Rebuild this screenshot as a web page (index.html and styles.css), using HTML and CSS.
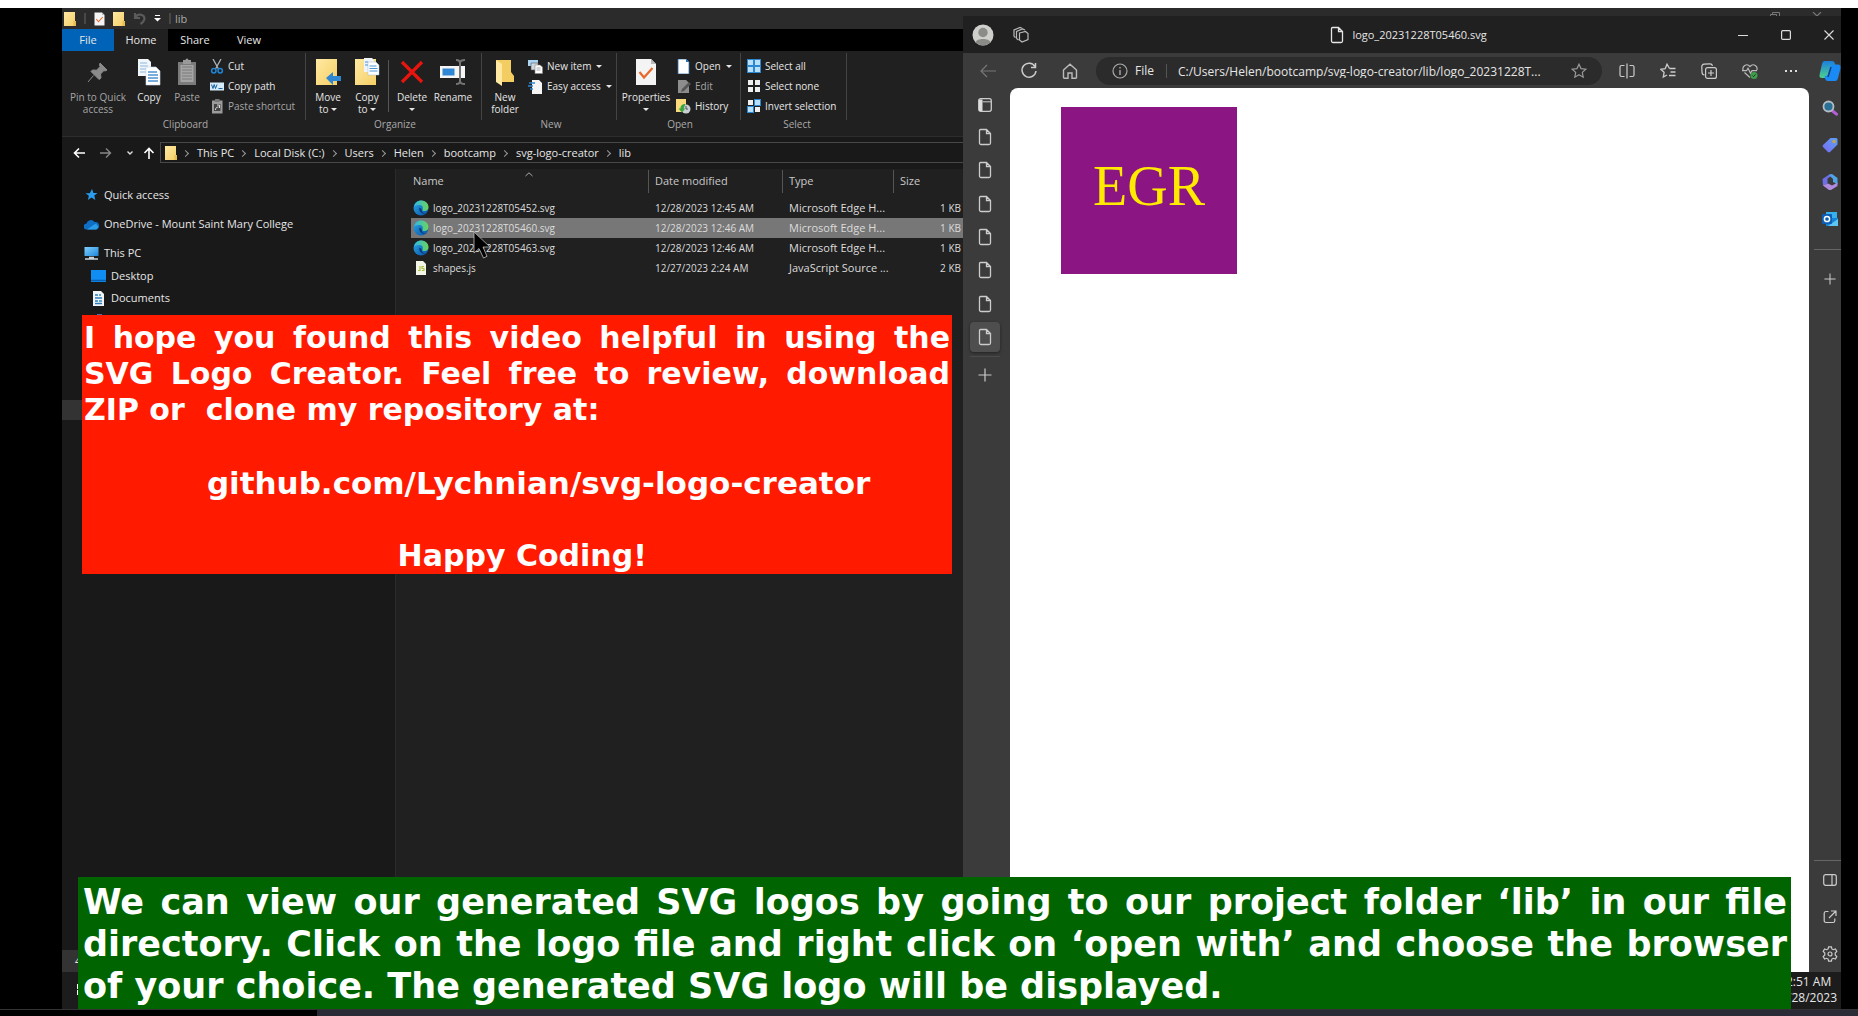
FILE: index.html
```html
<!DOCTYPE html>
<html lang="en">
<head>
<meta charset="utf-8">
<title>SVG Logo Creator walkthrough</title>
<link rel="stylesheet" href="styles.css">
</head>
<body>
<svg class="defs" aria-hidden="true">
  <defs>
    <linearGradient id="fold" x1="0" x2="1" y1="0" y2="1"><stop offset="0" stop-color="#ffe9a2"/><stop offset="1" stop-color="#f5cf66"/></linearGradient>
    <linearGradient id="edgeA" x1="0" x2="1" y1="0" y2="1"><stop offset="0" stop-color="#2aa9e0"/><stop offset="1" stop-color="#0a4fa8"/></linearGradient>
    <linearGradient id="edgeB" x1="0" x2="1"><stop offset="0" stop-color="#2fb5e8"/><stop offset="1" stop-color="#6ad65a"/></linearGradient>
    <linearGradient id="sky" x1="0" x2="1" y1="0" y2="1"><stop offset="0" stop-color="#7fd0ff"/><stop offset="1" stop-color="#1d86d8"/></linearGradient>
    <linearGradient id="cop" x1="0" x2="0" y1="0" y2="1"><stop offset="0" stop-color="#1b7fe0"/><stop offset="1" stop-color="#4fd08a"/></linearGradient>
    <linearGradient id="tag" x1="1" x2="0" y1="0" y2="1"><stop offset="0" stop-color="#5aa2f5"/><stop offset="1" stop-color="#7b6cf0"/></linearGradient>
  </defs>
  <symbol id="i-folder" viewBox="0 0 12 14"><path d="M0 0h11v10h1v4H0z" fill="url(#fold)"/><path d="M9.500 14V9h2.500v5z" fill="#e8bd4f"/></symbol>
  <symbol id="i-edge" viewBox="0 0 16 16"><circle cx="8" cy="8" r="7.500" fill="url(#edgeA)"/><path d="M1 6.500C2 2.500 5 .5 8.300.5c4.200 0 7.200 3 7.200 6.500 0 2.400-1.700 4-4 4-1.600 0-2.400-.7-2-1.600.9-1.900-.2-4.300-3-4.300-2.200 0-4.300.6-5.500 1.400z" fill="url(#edgeB)"/><path d="M6.500 7.500c-1 3 1.200 6.300 5.500 6.300.8 0 1.500-.1 2-.4-3 .6-6-1.600-5.200-4.200z" fill="#073b80"/></symbol>
  <symbol id="i-page" viewBox="0 0 16 18"><path d="M3.500 1.500h6l4 4v9.500a1.500 1.500 0 0 1-1.500 1.500H4A1.500 1.500 0 0 1 2.500 15V2.500a1 1 0 0 1 1-1zM9.500 1.500V5.500h4" fill="none" stroke="currentColor" stroke-width="1.300"/></symbol>
  <symbol id="i-check" viewBox="0 0 20 28"><path d="M0 1h15l5 5v21H0z" fill="#f4f4f4"/><path d="M15 1v5h5z" fill="#b9b9b9"/><path d="M3.500 14l4.500 5.500L16.500 10" fill="none" stroke="#e8692c" stroke-width="2.200"/></symbol>
  <symbol id="i-doc2" viewBox="0 0 24 28"><path d="M1 1h10l3 3v14H1z" fill="#f1f6fb"/><path d="M3 5h7M3 8h8M3 11h8M3 14h8" stroke="#8db6dc"/><path d="M9 9h10l4 4v14H9z" fill="#fff" stroke="#c4d7e8" stroke-width=".6"/><path d="M11 14h9M11 17h10M11 20h10M11 23h10" stroke="#4c93d4" stroke-width="1.300"/></symbol>
  <symbol id="i-plus" viewBox="0 0 14 14"><path d="M7 .5v13M.5 7h13" stroke="currentColor" stroke-width="1.200"/></symbol>
</svg>

<main class="stage">
  <section class="explorer" aria-label="File Explorer">
    <header class="ex-title">
      <svg width="12" height="14"><use href="#i-folder"/></svg>
      <i class="bar"></i>
      <svg class="qa-check" width="11" height="14"><use href="#i-check"/></svg>
      <svg width="12" height="14"><use href="#i-folder"/></svg>
      <svg width="13" height="13" viewBox="0 0 13 13"><path d="M2 1v5h5M2 5.500C4 2.500 8 1.500 10.500 4c2 2.500.5 6-3 8" fill="none" stroke="#5b5b5b" stroke-width="2.200"/></svg>
      <svg width="7" height="7" viewBox="0 0 7 7"><path d="M1 .5h5" stroke="#fff"/><path d="M0 3h7L3.500 6.500z" fill="#fff"/></svg>
      <i class="bar"></i>
      <span>lib</span>
    </header>
    <nav class="ex-tabs">
      <button class="file">File</button><button class="on">Home</button><button>Share</button><button>View</button>
    </nav>

    <div class="ribbon">
      <section class="grp clip">
        <div class="tools">
          <button class="big w66 dim"><svg width="24" height="28" viewBox="0 0 24 28"><path d="M14 5l7 7-2 1-1-.5-3.500 3.500.5 4-2 1.500-8-8L6.500 12l4 .2 3.500-3.500-.5-1.500zM7.500 17.500L2 24" fill="#8a8a8a" stroke="#8a8a8a"/></svg><span>Pin to Quick<br>access</span></button>
          <button class="big w36"><svg width="24" height="28"><use href="#i-doc2"/></svg><span>Copy</span></button>
          <button class="big w40 dim"><svg width="20" height="28" viewBox="0 0 20 28"><path d="M1 4h18v23H1z" fill="#7b7b7b"/><path d="M3.500 7h13v17h-13z" fill="#a5a5a5"/><path d="M5 9h10M5 12h10M5 15h10M5 18h10M5 21h10" stroke="#7b7b7b"/><path d="M6 2h2.500a1.500 1.500 0 0 1 3 0H14v4H6z" fill="#999"/></svg><span>Paste</span></button>
          <div class="stack">
            <button><svg width="14" height="15" viewBox="0 0 14 15"><path d="M3 0l5.500 10M11 0L5.500 10" stroke="#a9b4bd" stroke-width="1.300"/><circle cx="3.800" cy="11.800" r="2.200" fill="none" stroke="#1e86d6" stroke-width="1.500"/><circle cx="10.200" cy="11.800" r="2.200" fill="none" stroke="#1e86d6" stroke-width="1.500"/></svg>Cut</button>
            <button><svg width="14" height="15" viewBox="0 0 14 15"><path d="M0 3.500h14v8H0z" fill="#d5ecfb"/><path d="M1.500 5.500l1.500 4 1.200-4 1.300 4 1.500-4M8.500 9.500h4" fill="none" stroke="#17609f"/></svg>Copy path</button>
            <button class="dim"><svg width="14" height="15" viewBox="0 0 14 15"><path d="M2 1.500h10.500v13H2z" fill="#9b9b9b"/><path d="M5 0h4.500v3H5z" fill="#777"/><path d="M4 5h6.500v7H4z" fill="#444"/><path d="M5.500 11c0-2 1-3 3-3M7 6h2.500v3" fill="none" stroke="#ddd"/></svg>Paste shortcut</button>
          </div>
        </div>
        <h2>Clipboard</h2>
      </section>
      <section class="grp org">
        <div class="tools">
          <button class="big w40"><svg width="26" height="28" viewBox="0 0 26 28"><path d="M1 1h21v26H1z" fill="url(#fold)"/><path d="M11 20l7-6v4h8v5h-8v4z" fill="#2f86d2"/></svg><span>Move<br>to <i class="dn"></i></span></button>
          <button class="big w38"><svg width="26" height="28" viewBox="0 0 26 28"><path d="M1 1h21v26H1z" fill="url(#fold)"/><path d="M10 0h8l2 2v12H10z" fill="#eef4fa"/><path d="M14 4h8l3 3v10H14z" fill="#fff" stroke="#9fbad3" stroke-width=".5"/><path d="M15.500 8h7M15.500 10.500h8M15.500 13h8M11 4h3M11 7h3" stroke="#4c93d4"/></svg><span>Copy<br>to <i class="dn"></i></span></button>
          <i class="split"></i>
          <button class="big w40"><svg width="24" height="28" viewBox="0 0 24 28"><path d="M2 4l20 20M22 4L2 24" stroke="#e8150f" stroke-width="3.200"/></svg><span>Delete<br><i class="dn"></i></span></button>
          <button class="big w42"><svg width="26" height="28" viewBox="0 0 26 28"><path d="M0 8h25v12H0z" fill="#f5f5f5"/><path d="M2.500 10.500h12v7h-12z" fill="#2f86d2"/><path d="M16 2c3 0 4 1 4 3v18c0 2-1 3-4 3M25 2c-3 0-5 1-5 3M20 23c0 2 2 3 5 3" fill="none" stroke="#747474" stroke-width="2"/></svg><span>Rename</span></button>
        </div>
        <h2>Organize</h2>
      </section>
      <section class="grp new">
        <div class="tools">
          <button class="big w40"><svg width="20" height="28" viewBox="0 0 20 28"><path d="M1 2h15v12l3 4v6H6z" fill="#f3cd62"/><path d="M1 2l6 4v22l-6-4z" fill="#ffe9a2"/></svg><span>New<br>folder</span></button>
          <div class="stack">
            <button><svg width="15" height="15" viewBox="0 0 15 15"><path d="M0 1h10v6H0z" fill="#a9d4f2"/><path d="M3 4h7v7H3z" fill="#cfd8df" stroke="#555" stroke-width=".6"/><path d="M7 6h5l2.500 2v6.500H7z" fill="#fff" stroke="#888" stroke-width=".6"/><path d="M8.500 9h4M8.500 11h4" stroke="#aaa"/></svg>New item <i class="dn"></i></button>
            <button><svg width="15" height="15" viewBox="0 0 15 15"><path d="M4 1h7l3 3v11H4z" fill="#f5f5f5"/><path d="M1 4h6M0 7h5M2 10h3" stroke="#2f86d2" stroke-width="1.300"/></svg>Easy access <i class="dn"></i></button>
          </div>
        </div>
        <h2>New</h2>
      </section>
      <section class="grp open">
        <div class="tools">
          <button class="big w54"><svg width="20" height="28"><use href="#i-check"/></svg><span>Properties<br><i class="dn"></i></span></button>
          <div class="stack">
            <button><svg width="15" height="15" viewBox="0 0 15 15"><path d="M2 0h8l3 3v12H2z" fill="#fff" stroke="#2f6fb0" stroke-width=".8"/><path d="M10 0v3h3z" fill="#2f6fb0"/></svg>Open <i class="dn"></i></button>
            <button class="dim"><svg width="15" height="15" viewBox="0 0 15 15"><path d="M2 1h8l3 3v10H2z" fill="#8d8d8d"/><path d="M5 13l1-3 7-7 2 2-7 7z" fill="#555"/></svg>Edit</button>
            <button><svg width="15" height="15" viewBox="0 0 15 15"><path d="M0 0h10v13H0z" fill="#f8da7c"/><circle cx="10" cy="10" r="4.500" fill="#c8ced2"/><path d="M10 7v3h2" fill="none" stroke="#555"/><path d="M9.500 5C6 5 4.500 7 4.500 9.500H2.500l3.500 4 3.200-4H7.500" fill="#36a53e"/></svg>History</button>
          </div>
        </div>
        <h2>Open</h2>
      </section>
      <section class="grp sel">
        <div class="tools">
          <div class="stack">
            <button><svg width="14" height="14" viewBox="0 0 14 14"><path d="M0 0h14v14H0z" fill="#2d86d0"/><path d="M1 1h5v5H1zM8 1h5v5H8zM1 8h5v5H1zM8 8h5v5H8z" fill="#b9e0fb"/></svg>Select all</button>
            <button><svg width="14" height="14" viewBox="0 0 14 14"><path d="M1 1h5v5H1zM8 1h5v5H8zM1 8h5v5H1zM8 8h5v5H8z" fill="#efefef"/></svg>Select none</button>
            <button><svg width="14" height="14" viewBox="0 0 14 14"><path d="M7 0h7v7H7zM0 7h7v7H0z" fill="#2d86d0"/><path d="M8 1h5v5H8zM1 8h5v5H1z" fill="#b9e0fb"/><path d="M1 1h5v5H1zM8 8h5v5H8z" fill="#efefef"/></svg>Invert selection</button>
          </div>
        </div>
        <h2>Select</h2>
      </section>
    </div>

    <div class="address">
      <div class="arrows">
        <svg width="12" height="12" viewBox="0 0 12 12"><path d="M12 6H1.500M6 1.500L1.500 6 6 10.500" fill="none" stroke="#fff" stroke-width="1.600"/></svg>
        <svg width="12" height="12" viewBox="0 0 12 12"><path d="M0 6h10.500M6 1.500L10.500 6 6 10.500" fill="none" stroke="#868686" stroke-width="1.400"/></svg>
        <svg width="6" height="6" viewBox="0 0 6 6"><path d="M.5 1.500L3 4l2.500-2.500" fill="none" stroke="#ddd" stroke-width="1.400"/></svg>
        <svg width="12" height="12" viewBox="0 0 12 12"><path d="M6 12V1.500M1.500 6L6 1.500 10.500 6" fill="none" stroke="#fff" stroke-width="1.600"/></svg>
      </div>
      <nav class="crumbs">
        <svg width="12" height="14"><use href="#i-folder"/></svg>
        <a href="#">This PC</a><a href="#">Local Disk (C:)</a><a href="#">Users</a><a href="#">Helen</a><a href="#">bootcamp</a><a href="#">svg-logo-creator</a><a href="#">lib</a>
      </nav>
    </div>

    <div class="ex-body">
      <nav class="tree">
        <a href="#"><svg width="14" height="14" viewBox="0 0 14 14"><path d="M7.500 1l1.400 4H13L9.800 7.600l1 4.400L7 9.500 3.400 12l1-4.200L1 5.300h4.300z" fill="#2a9df0"/></svg>Quick access</a>
        <a href="#"><svg width="15" height="11" viewBox="0 0 15 11"><path d="M3 10.500a3 3 0 0 1-.5-6A4.500 4.500 0 0 1 10.500 3 3.800 3.800 0 0 1 12 10.500z" fill="#0f6fc5"/><path d="M3 10.500l8-5.500a3 3 0 0 1 1.500 5.500z" fill="#2b9de8"/></svg>OneDrive - Mount Saint Mary College</a>
        <a href="#"><svg width="15" height="14" viewBox="0 0 15 14"><path d="M.5 1h14v9H.5z" fill="url(#sky)"/><path d="M5 11.500h5M1 13h13" stroke="#c8d3db" stroke-width="1.300"/></svg>This PC</a>
        <a href="#" class="sub"><svg width="15" height="12" viewBox="0 0 15 12"><path d="M0 0h15v12H0z" fill="#0f8df2"/><path d="M0 10.500h15" stroke="#0b5fae" stroke-width="1.500"/></svg>Desktop</a>
        <a href="#" class="sub"><svg width="15" height="15" viewBox="0 0 15 15"><path d="M2 0h8l3 3v12H2z" fill="#f1f4f7"/><path d="M4 4h3M4 7h7M4 10h3M4 12.500h7" stroke="#2b7cb8" stroke-width="1.300"/><path d="M8 3h2v2H8zM8 9h3v2H8z" fill="#60a5cf"/></svg>Documents</a>
        <i class="next"></i>
        <i class="picked"></i>
      </nav>
      <div class="list">
        <table>
          <colgroup><col class="c-name"><col class="c-date"><col class="c-type"><col class="c-size"></colgroup>
          <thead><tr><th><span>Name</span><svg class="sort" width="8" height="5" viewBox="0 0 8 5"><path d="M.5 4L4 .8 7.500 4" fill="none" stroke="#aaa"/></svg></th><th>Date modified</th><th>Type</th><th>Size</th></tr></thead>
          <tbody>
            <tr><td><svg width="16" height="16"><use href="#i-edge"/></svg>logo_20231228T05452.svg</td><td>12/28/2023 12:45 AM</td><td>Microsoft Edge H...</td><td>1 KB</td></tr>
            <tr class="on"><td><svg width="16" height="16"><use href="#i-edge"/></svg>logo_20231228T05460.svg</td><td>12/28/2023 12:46 AM</td><td>Microsoft Edge H...</td><td>1 KB</td></tr>
            <tr><td><svg width="16" height="16"><use href="#i-edge"/></svg>logo_20231228T05463.svg</td><td>12/28/2023 12:46 AM</td><td>Microsoft Edge H...</td><td>1 KB</td></tr>
            <tr><td><svg width="16" height="16" viewBox="0 0 16 16"><path d="M3 1h7l3 3v11H3z" fill="#f3f5e6"/><path d="M7 6v4.500H5M11 6.500H9v2h2v2H8.800" fill="none" stroke="#a9bf3f" stroke-width="1.100"/></svg>shapes.js</td><td>12/27/2023 2:24 AM</td><td>JavaScript Source ...</td><td>2 KB</td></tr>
          </tbody>
        </table>
        <svg class="cursor" width="18" height="30" viewBox="0 0 18 30"><path d="M1 1v21l5-4.500 4.500 9.500 3.500-1.700-4-9.300H17z" fill="#000" stroke="#bbb" stroke-width=".8"/></svg>
      </div>
    </div>
    <footer class="ex-status">4</footer>

    <aside class="note thanks">
      <p><span>I hope you found this video helpful in using the</span><span>SVG Logo Creator. Feel free to review, download</span>ZIP or&nbsp; clone my repository at:</p>
      <p class="mid repo">&nbsp;&nbsp;&nbsp;&nbsp;github.com/Lychnian/svg-logo-creator</p>
      <p class="mid">&nbsp;Happy Coding!</p>
    </aside>
  </section>

  <section class="right">
    <div class="behind">
      <svg width="10" height="4" viewBox="0 0 10 4"><path d="M.5 4V2.500h6V4M2.500 2V.5h7V4" fill="none" stroke="#777"/></svg>
      <svg width="10" height="4" viewBox="0 0 10 4"><path d="M1 0l4 4 4-4" fill="none" stroke="#777" stroke-width="1.200"/></svg>
    </div>
    <section class="browser" aria-label="Browser">
      <header class="br-title">
        <div class="br-left">
          <svg width="22" height="22" viewBox="0 0 22 22"><circle cx="11" cy="11" r="10.500" fill="#cfcfcb"/><circle cx="11" cy="8.500" r="4.700" fill="#8b8b87"/><path d="M3.500 18.300c1-4.500 14-4.500 15 0a10.500 10.500 0 0 1-15 0z" fill="#8b8b87"/></svg>
          <svg width="18" height="18" viewBox="0 0 18 18"><path d="M7.500 7l6-1.500 2.500 2v6l-6 2.500-2.500-2zM4.500 12.500v-7l6-2.500 2.500 1M2 10.500V4l6-2.500 2.500 1M4.500 12.500l2 1.500M2 10.500l1.500 1" fill="none" stroke="#b9b9b9" stroke-width="1.200"/></svg>
        </div>
        <h1><svg width="16" height="18"><use href="#i-page"/></svg>logo_20231228T05460.svg</h1>
        <div class="br-win">
          <button aria-label="Minimize"><svg width="10" height="10" viewBox="0 0 10 10"><path d="M0 5.500h10" stroke="#ddd"/></svg></button>
          <button aria-label="Maximize"><svg width="10" height="10" viewBox="0 0 10 10"><rect x=".6" y=".6" width="8.800" height="8.800" rx="1.200" fill="none" stroke="#ddd" stroke-width="1.200"/></svg></button>
          <button aria-label="Close"><svg width="10" height="10" viewBox="0 0 10 10"><path d="M.5.5l9 9M9.500.5l-9 9" stroke="#ddd" stroke-width="1.100"/></svg></button>
        </div>
      </header>
      <div class="br-bar">
        <button aria-label="Back"><svg width="18" height="16" viewBox="0 0 18 16"><path d="M17 8H2M8 2L2 8l6 6" fill="none" stroke="#777" stroke-width="1.200"/></svg></button>
        <button aria-label="Reload"><svg width="18" height="18" viewBox="0 0 18 18"><path d="M15 4.500A7 7 0 1 0 16 9M15.500 1v4.500H11" fill="none" stroke="#ccc" stroke-width="1.500"/></svg></button>
        <button aria-label="Home"><svg width="18" height="18" viewBox="0 0 18 18"><path d="M2.500 8L9 2.200 15.500 8v7.500a.8.800 0 0 1-.8.800H11V11H7v5.300H3.300a.8.800 0 0 1-.8-.8z" fill="none" stroke="#bbb" stroke-width="1.400"/></svg></button>
        <div class="url">
          <svg width="16" height="16" viewBox="0 0 16 16"><circle cx="8" cy="8" r="7" fill="none" stroke="#aaa" stroke-width="1.200"/><path d="M8 7v5M8 4v1.500" stroke="#aaa" stroke-width="1.400"/></svg>
          <label for="u">File</label>
          <input id="u" value="C:/Users/Helen/bootcamp/svg-logo-creator/lib/logo_20231228T...">
          <svg width="16" height="16" viewBox="0 0 16 16"><path d="M8 1.200l2 4.400 4.800.6-3.500 3.200.9 4.800L8 11.800l-4.200 2.400.9-4.800L1.200 6.200 6 5.600z" fill="none" stroke="#999" stroke-width="1.200"/></svg>
        </div>
        <div class="acts">
          <button aria-label="Split screen"><svg width="16" height="16" viewBox="0 0 16 16"><path d="M5.500 2.500h-3a1.500 1.500 0 0 0-1.500 1.500v8a1.500 1.500 0 0 0 1.500 1.500h3M10.500 2.500h3A1.500 1.500 0 0 1 15 4v8a1.500 1.500 0 0 1-1.500 1.500h-3M8 .5v15" fill="none" stroke="#ccc" stroke-width="1.200"/></svg></button>
          <button aria-label="Favorites"><svg width="16" height="16" viewBox="0 0 16 16"><path d="M9.500 5.500L7 1.200 5.200 5.700.8 6.300l3.300 3-.8 4.800L7 12M9.500 5.500h6M10.500 9h5M9 12.500h6.500" fill="none" stroke="#ccc" stroke-width="1.300"/></svg></button>
          <button aria-label="Collections"><svg width="16" height="16" viewBox="0 0 16 16"><rect x="4.600" y="4.600" width="10.800" height="10.800" rx="2" fill="none" stroke="#ccc" stroke-width="1.200"/><path d="M10 7v6M7 10h6M3.500 12A3 3 0 0 1 1 9L.8 4A2.500 2.500 0 0 1 3 1.200L9 .8a2.500 2.500 0 0 1 2.500 2" fill="none" stroke="#ccc" stroke-width="1.200"/></svg></button>
          <button aria-label="Browser essentials"><svg width="16" height="16" viewBox="0 0 16 16"><path d="M1.200 7C-.2 3.500 4.500-.5 8 3.500c3.500-4 8.200 0 6.800 3.500M2.500 9.500L8 14.500M0 7.700h4.500l1.500-2.500 2.500 5 1.500-2.500H15" fill="none" stroke="#bbb" stroke-width="1.200"/><circle cx="12" cy="12.500" r="3.500" fill="#3f9e4b"/><path d="M10.500 12.500l1 1 2-2" fill="none" stroke="#222" stroke-width=".9"/></svg></button>
          <button aria-label="More"><svg width="16" height="16" viewBox="0 0 16 16"><path d="M2 8h2M7 8h2M12 8h2" stroke="#ddd" stroke-width="2"/></svg></button>
        </div>
        <svg class="copilot" width="22" height="22" viewBox="0 0 22 22"><path d="M6 1h7c2 0 2.500 1 3 3l1 3h-5L9 16c-.5 1.500-1 2-3 2H3c-2 0-3-1-2.300-4L3 4c.6-2 1.200-3 3-3z" fill="url(#cop)"/><path d="M16 21H9c-2 0-2.500-1-3-3l-.5-2c2 0 3-.5 3.500-2l2.500-7c.5-1.500 1.500-2.500 3.500-2.500h4c2 0 3 1.500 2.300 4.500L19 18c-.6 2-1.200 3-3 3z" fill="#1a8bf5"/><path d="M12 7l-3 10" stroke="#123e86" stroke-width="1.500"/></svg>
      </div>
      <div class="br-body">
        <nav class="vtabs">
          <button aria-label="Tab actions"><svg width="14" height="14" viewBox="0 0 14 14"><rect x=".7" y=".7" width="12.600" height="12.600" rx="2" fill="none" stroke="#ccc" stroke-width="1.300"/><path d="M1 1.500h3.500v11.500H1z" fill="#ddd"/><path d="M4.500 3.800H13" stroke="#ccc"/></svg></button>
          <div class="pages">
            <button aria-label="Tab 1"><svg width="16" height="18"><use href="#i-page"/></svg></button>
            <button aria-label="Tab 2"><svg width="16" height="18"><use href="#i-page"/></svg></button>
            <button aria-label="Tab 3"><svg width="16" height="18"><use href="#i-page"/></svg></button>
            <button aria-label="Tab 4"><svg width="16" height="18"><use href="#i-page"/></svg></button>
            <button aria-label="Tab 5"><svg width="16" height="18"><use href="#i-page"/></svg></button>
            <button aria-label="Tab 6"><svg width="16" height="18"><use href="#i-page"/></svg></button>
            <button aria-label="Tab 7" class="on"><svg width="16" height="18"><use href="#i-page"/></svg></button>
          </div>
          <button aria-label="New tab"><svg width="14" height="14"><use href="#i-plus"/></svg></button>
        </nav>
        <article class="page">
          <svg class="logo" width="176" height="167" viewBox="0 0 176 167"><rect width="176" height="167" fill="#8a1583"/><text x="88" y="98" text-anchor="middle">EGR</text></svg>
        </article>
        <aside class="side">
          <div class="apps">
            <button aria-label="Search"><svg width="16" height="16" viewBox="0 0 16 16"><path d="M10 10.500l4.500 3.700" stroke="#b45fd6" stroke-width="3" stroke-linecap="round"/><circle cx="6.500" cy="6.500" r="5" fill="#2a6f95" stroke="#b5bdc2" stroke-width="1.800"/></svg></button>
            <button aria-label="Shopping"><svg width="16" height="16" viewBox="0 0 16 16"><path d="M8.500 1h5.500a1.500 1.500 0 0 1 1.500 1.500V7.500L8 15a1.500 1.500 0 0 1-2 0L1 10a1.500 1.500 0 0 1 0-2z" fill="url(#tag)"/><circle cx="12" cy="4.500" r="1.700" fill="#caa54a"/></svg></button>
            <button aria-label="Microsoft 365"><svg width="16" height="16" viewBox="0 0 16 16"><path d="M8 0l3 1-5.500 3.500v5L1 12 .5 5z" fill="#6d6ee8"/><path d="M7 1l3-1 5.500 4v6L11 8V5z" fill="#4fa3e8"/><path d="M1 11.500L6 9.500l4 2 5.500-3v3.500L9 16H7z" fill="#b18be0"/></svg></button>
            <button aria-label="Outlook"><svg width="16" height="16" viewBox="0 0 16 16"><path d="M4 1h11v7H4z" fill="#36b0ee"/><path d="M4 7h12v8H4z" fill="#1684d4"/><path d="M6 15l10-7v7z" fill="#5ec5f5"/><rect x="0" y="3" width="10" height="10" rx="1" fill="#0c5fb5"/><circle cx="5" cy="8" r="2.600" fill="none" stroke="#fff" stroke-width="1.500"/></svg></button>
          </div>
          <button class="add" aria-label="Customize"><svg width="12" height="12"><use href="#i-plus"/></svg></button>
          <div class="tail">
            <button aria-label="Sidebar"><svg width="14" height="14" viewBox="0 0 14 14"><rect x=".7" y="1.700" width="12.600" height="10.600" rx="2" fill="none" stroke="#ccc" stroke-width="1.200"/><path d="M9 2v10" stroke="#ccc" stroke-width="1.200"/></svg></button>
            <button aria-label="Open externally"><svg width="14" height="14" viewBox="0 0 14 14"><path d="M5.500 1.500H3A1.800 1.800 0 0 0 1.200 3v7.500A1.800 1.800 0 0 0 3 12.500h7a1.800 1.800 0 0 0 1.800-1.800V8.500M8 1h5v5M13 1L6 8" fill="none" stroke="#ccc" stroke-width="1.200"/></svg></button>
            <button aria-label="Settings"><svg width="16" height="16" viewBox="0 0 16 16"><path d="M6.600.8h2.800l.5 2.100 1.400.8 2.100-.7 1.400 2.500-1.600 1.500v2l1.600 1.500-1.400 2.500-2.100-.7-1.400.8-.5 2.100H6.600l-.5-2.100-1.400-.8-2.100.7L1.200 10.500 2.800 9V7L1.200 5.500 2.600 3l2.100.7 1.400-.8z" fill="none" stroke="#ccc" stroke-width="1.200"/><circle cx="8" cy="8" r="2" fill="none" stroke="#ccc" stroke-width="1.200"/></svg></button>
          </div>
        </aside>
      </div>
    </section>
  </section>

  <footer class="taskbar">
    <svg width="10" height="11" viewBox="0 0 10 11"><path d="M0 0h4v5H0zM5 0h5v5H5zM0 6h4v5H0zM5 6h5v5H5z" fill="#fff"/></svg>
    <time>12:51 AM<br>12/28/2023</time>
  </footer>

  <aside class="note caption">
    <p><span>We can view our generated SVG logos by going to our project folder ‘lib’ in our file</span><span>directory. Click on the logo file and right click on ‘open with’ and choose the browser</span>of your choice. The generated SVG logo will be displayed.</p>
  </aside>
</main>
<div class="seek"><div class="played" style="width:17.060%"></div></div>
</body>
</html>
```
FILE: styles.css
```css
* { box-sizing: border-box; }
html, body { height: 100%; }
body {
  margin: 0;
  display: flex;
  flex-direction: column;
  background: #000;
  color: #e6e6e6;
  font: 11px/12px "Open Sans", "Noto Sans", sans-serif;
  border-top: 8px solid #fff;
  overflow: hidden;
}
button { font: inherit; color: inherit; background: none; border: 0; padding: 0; margin: 0; }
a { color: inherit; text-decoration: none; }
h1, h2, p { margin: 0; font: inherit; }
svg { flex: none; display: block; }
.defs { position: absolute; width: 0; height: 0; }

.stage {
  position: relative;
  flex: 1;
  min-height: 0;
  display: grid;
  grid-template: minmax(0, 1fr) 37px / minmax(0, 901fr) minmax(0, 878fr);
  padding: 0 17px 0 62px;
}

/* File Explorer */
.explorer { position: relative; display: flex; flex-direction: column; background: #191919; overflow: hidden; }
.ex-title { display: flex; align-items: center; gap: 8px; height: 21px; padding-left: 2px; background: #2b2b2b; color: #aaa; flex: none; }
.ex-title .bar { width: 2px; height: 11px; background: #484848; }
.ex-title span { margin-left: -4px; }
.ex-tabs { display: flex; height: 22px; background: #000; flex: none; }
.ex-tabs button { width: 54px; }
.ex-tabs .file { width: 52px; background: #0063b7; }
.ex-tabs .on { background: #202020; }

.ribbon { display: flex; height: 86px; background: #202020; border-bottom: 1px solid #2d2d2d; font-size: 10px; flex: none; }
.grp { display: flex; flex-direction: column; padding-top: 5px; background: linear-gradient(#444, #444) right 2px / 1px 67px no-repeat; flex: none; }
.grp h2 { height: 20px; line-height: 16px; text-align: center; color: #aaa; }
.tools { display: flex; flex: 1; white-space: nowrap; }
.clip { width: 244px; padding-left: 3px; }
.org { width: 176px; padding-left: 2px; }
.new { width: 135px; padding-left: 3px; }
.open { width: 124px; padding-left: 2px; }
.sel { width: 106px; padding-left: 6px; }
.big { display: flex; flex-direction: column; align-items: center; gap: 5px; padding-top: 2px; flex: none; }
.w36 { width: 36px; }
.w38 { width: 38px; }
.w40 { width: 40px; }
.w42 { width: 42px; }
.w54 { width: 54px; }
.w66 { width: 66px; }
.dim { color: #a6a6a6; }
.stack { margin-left: 3px; }
.sel .stack { margin-left: 0; }
.stack button { display: flex; align-items: center; gap: 4px; height: 20px; }
.split { width: 1px; height: 52px; margin: 4px 3px 0 2px; background: #555; }
.dn { display: inline-block; border: 3px solid transparent; border-top-color: currentColor; border-bottom: 0; margin: 0 0 2px; }
.stack .dn { margin: 0 0 0 1px; }

.address { display: flex; height: 32px; padding: 5px 0 6px; flex: none; }
.arrows { display: flex; align-items: center; gap: 15px; width: 98px; padding-left: 11px; }
.arrows svg:last-child { margin-left: -5px; }
.crumbs { flex: 1; display: flex; align-items: center; border: 1px solid #484848; border-right: 0; padding-left: 4px; }
.crumbs a::before { content: ""; display: inline-block; width: 4px; height: 4px; border: solid #999; border-width: 1px 1px 0 0; transform: rotate(45deg); margin: 0 9px 1px 6px; }

.ex-body { flex: 1; display: flex; min-height: 0; }
.tree { width: 333px; padding-top: 16px; display: flex; flex-direction: column; flex: none; }
.tree a { display: flex; align-items: center; gap: 5px; height: 20px; padding-left: 22px; margin-bottom: 9px; }
.tree svg { width: 15px; }
.tree a.sub { padding-left: 29px; margin-bottom: 2px; }
.tree a.sub:nth-of-type(4) { margin-top: -6px; }
.tree .next { width: 5px; height: 2px; margin: 4px 0 0 35px; background: #4a6fae; }
.tree .picked { width: 100%; height: 20px; margin-top: 84px; background: #333; }
.list { position: relative; flex: 1; min-width: 0; padding: 1px 0 0 15px; background: #202020; border-left: 1px solid #2b2b2b; }
table { width: 100%; table-layout: fixed; border-collapse: collapse; white-space: nowrap; color: #dcdcdc; }
.c-name { width: 238px; }
.c-date { width: 134px; }
.c-type { width: 111px; }
th, td { padding: 0 0 0 6px; text-align: left; font-weight: 400; }
th { height: 28px; padding-bottom: 6px; color: #c8c8c8; background: linear-gradient(#555, #555) right top / 1px 23px no-repeat; }
th:last-child { background: none; }
th:first-child, td:first-child { padding-left: 2px; }
th .sort { float: right; margin: -3px 116px 0 0; }
th span { float: left; }
td { height: 20px; font-size: 10px; }
td:nth-child(3) { font-size: 11px; }
td:first-child svg { float: left; margin: -2px 4px -2px 0; }
td:last-child { text-align: right; padding: 0 2px 0 0; }
tr.on { background: #777; }
.cursor { position: absolute; left: 77px; top: 62px; }
.ex-status { height: 22px; padding: 5px 0 0 13px; background: #333; flex: none; }

/* Browser */
.right { display: flex; flex-direction: column; min-height: 0; background: #2b2b2b; }
.behind { display: flex; justify-content: flex-end; align-items: flex-end; gap: 32px; height: 8px; padding: 0 19px 0 0; flex: none; }
.browser { flex: 1; min-height: 0; display: flex; flex-direction: column; background: #3b3b3b; overflow: hidden; }
.br-title { display: grid; grid-template-columns: 1fr auto 1fr; align-items: center; height: 37px; background: #202020; flex: none; }
.br-left { display: flex; gap: 18px; align-items: center; padding-left: 9px; }
.br-title h1 { display: flex; align-items: center; gap: 7px; padding-left: 12px; }
.br-win { display: flex; justify-content: flex-end; gap: 33px; padding-right: 7px; }
.br-bar { display: flex; align-items: center; height: 35px; padding: 1px 0 0 4px; flex: none; }
.br-bar > button { width: 41px; display: grid; place-items: center; }
.url { flex: 1; min-width: 0; display: flex; align-items: center; height: 28px; margin-left: 6px; padding: 0 15px 0 16px; border-radius: 14px; background: #2b2b2b; font-size: 12px; }
.url label { margin: 0 12px 0 7px; }
.url input { flex: 1; min-width: 0; height: 14px; border: 0; border-left: 1px solid #555; padding: 0 0 0 11px; background: none; color: inherit; font: inherit; outline: 0; }
.acts { display: flex; gap: 25px; margin: 0 20px 0 17px; }
.br-body { flex: 1; display: flex; min-height: 0; }
.vtabs { width: 47px; display: flex; flex-direction: column; align-items: center; padding: 2px 4px 0 0; flex: none; }
.vtabs button { display: grid; place-items: center; width: 30px; height: 30px; color: #ccc; flex: none; }
.pages { display: flex; flex-direction: column; justify-content: space-between; height: 230px; margin: 2px 0 4px; flex: none; }
.pages .on { background: #4e4e4e; border-radius: 4px; box-shadow: 0 1px 3px #222; }
.vtabs > button:last-child { border-top: 1px solid #4a4a4a; height: 37px; }
.page { flex: 1; min-width: 0; padding: 19px 0 0 51px; background: #fff; border-radius: 8px 8px 0 0; }
.logo text { font: 56px "Liberation Serif", serif; fill: #ffea00; }
.side { width: 32px; display: flex; flex-direction: column; padding-left: 5px; color: #ccc; flex: none; }
.side button { display: grid; place-items: center; width: 31px; height: 37px; }
.apps { padding: 1px 0 12px; border-bottom: 1px solid #666; }
.side .add { height: 58px; }
.tail { margin-top: auto; border-top: 1px solid #666; }

.taskbar { grid-column: 1 / -1; display: flex; justify-content: space-between; align-items: center; background: #1c1c1c; padding: 0 4px 2px 15px; }
.taskbar time { text-align: center; font-size: 12px; line-height: 16px; }

/* Captions laid over the recording */
.note { position: absolute; color: #fff; font: bold 30px/36px Verdana, "DejaVu Sans", sans-serif; white-space: nowrap; }
.note span { display: block; text-align: justify; text-align-last: justify; white-space: normal; }
.thanks { top: 307px; left: 20px; right: 11px; padding: 5px 2px 0; background: #ff1a00; }
.thanks p + p { margin-top: 37px; }
.mid { text-align: center; }
.repo { font-size: 31px; }
.caption { left: 78px; right: 67px; bottom: 0; padding: 4px 4px 2px 5px; background: #006400; font-size: 35px; line-height: 42px; }

.seek { height: 7px; border-top: 1px solid #333; background: #2b2b38; flex: none; }
.played { height: 6px; background: #000; }
```
